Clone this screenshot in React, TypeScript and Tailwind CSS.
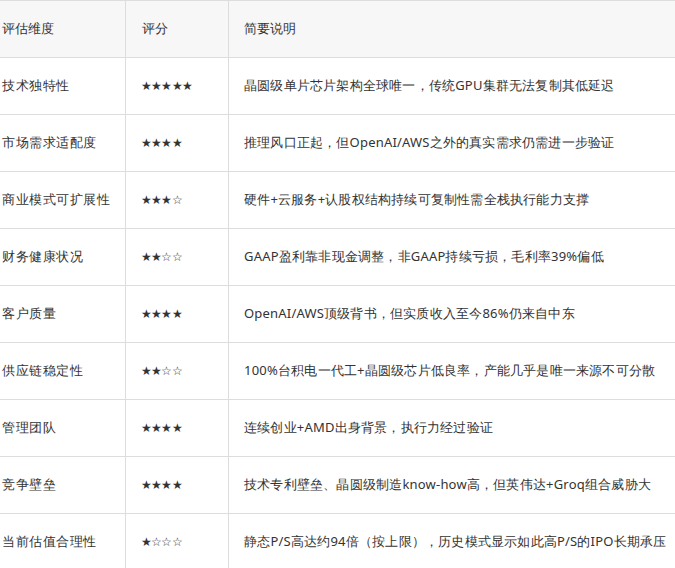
import React from "react";

const rows: [string, string, string][] = [
  ["技术独特性", "★★★★★", "晶圆级单片芯片架构全球唯一，传统GPU集群无法复制其低延迟"],
  ["市场需求适配度", "★★★★", "推理风口正起，但OpenAI/AWS之外的真实需求仍需进一步验证"],
  ["商业模式可扩展性", "★★★☆", "硬件+云服务+认股权结构持续可复制性需全栈执行能力支撑"],
  ["财务健康状况", "★★☆☆", "GAAP盈利靠非现金调整，非GAAP持续亏损，毛利率39%偏低"],
  ["客户质量", "★★★★", "OpenAI/AWS顶级背书，但实质收入至今86%仍来自中东"],
  ["供应链稳定性", "★★☆☆", "100%台积电一代工+晶圆级芯片低良率，产能几乎是唯一来源不可分散"],
  ["管理团队", "★★★★", "连续创业+AMD出身背景，执行力经过验证"],
  ["竞争壁垒", "★★★★", "技术专利壁垒、晶圆级制造know-how高，但英伟达+Groq组合威胁大"],
  ["当前估值合理性", "★☆☆☆", "静态P/S高达约94倍（按上限），历史模式显示如此高P/S的IPO长期承压"],
];

const App: React.FC = () => {
  return (
    <div className="w-[675px] h-[568px] overflow-hidden bg-white text-[#333] text-[13px] [font-family:'Noto_Sans_CJK_SC',sans-serif]">
      <table className="w-[677px] border-collapse table-fixed -ml-px">
        <colgroup>
          <col className="w-[126px]" />
          <col className="w-[103px]" />
          <col />
        </colgroup>
        <thead>
          <tr className="h-[57px] bg-[#f7f7f7]">
            <th className="border border-[#ddd] text-left font-normal pl-[2px]">评估维度</th>
            <th className="border border-[#ddd] text-left font-normal pl-[16px]">评分</th>
            <th className="border border-[#ddd] text-left font-normal pl-[15px]">简要说明</th>
          </tr>
        </thead>
        <tbody>
          {rows.map(([a, b, c]) => (
            <tr key={a} className="h-[57px]">
              <td className="border border-[#ddd] pl-[2px] tracking-[0.5px]">{a}</td>
              <td className="border border-[#ddd] pl-[15px] text-[12px] tracking-[-0.8px]">{b}</td>
              <td className="border border-[#ddd] pl-[15px] tracking-[0.2px] whitespace-nowrap">{c}</td>
            </tr>
          ))}
        </tbody>
      </table>
    </div>
  );
};

export default App;
